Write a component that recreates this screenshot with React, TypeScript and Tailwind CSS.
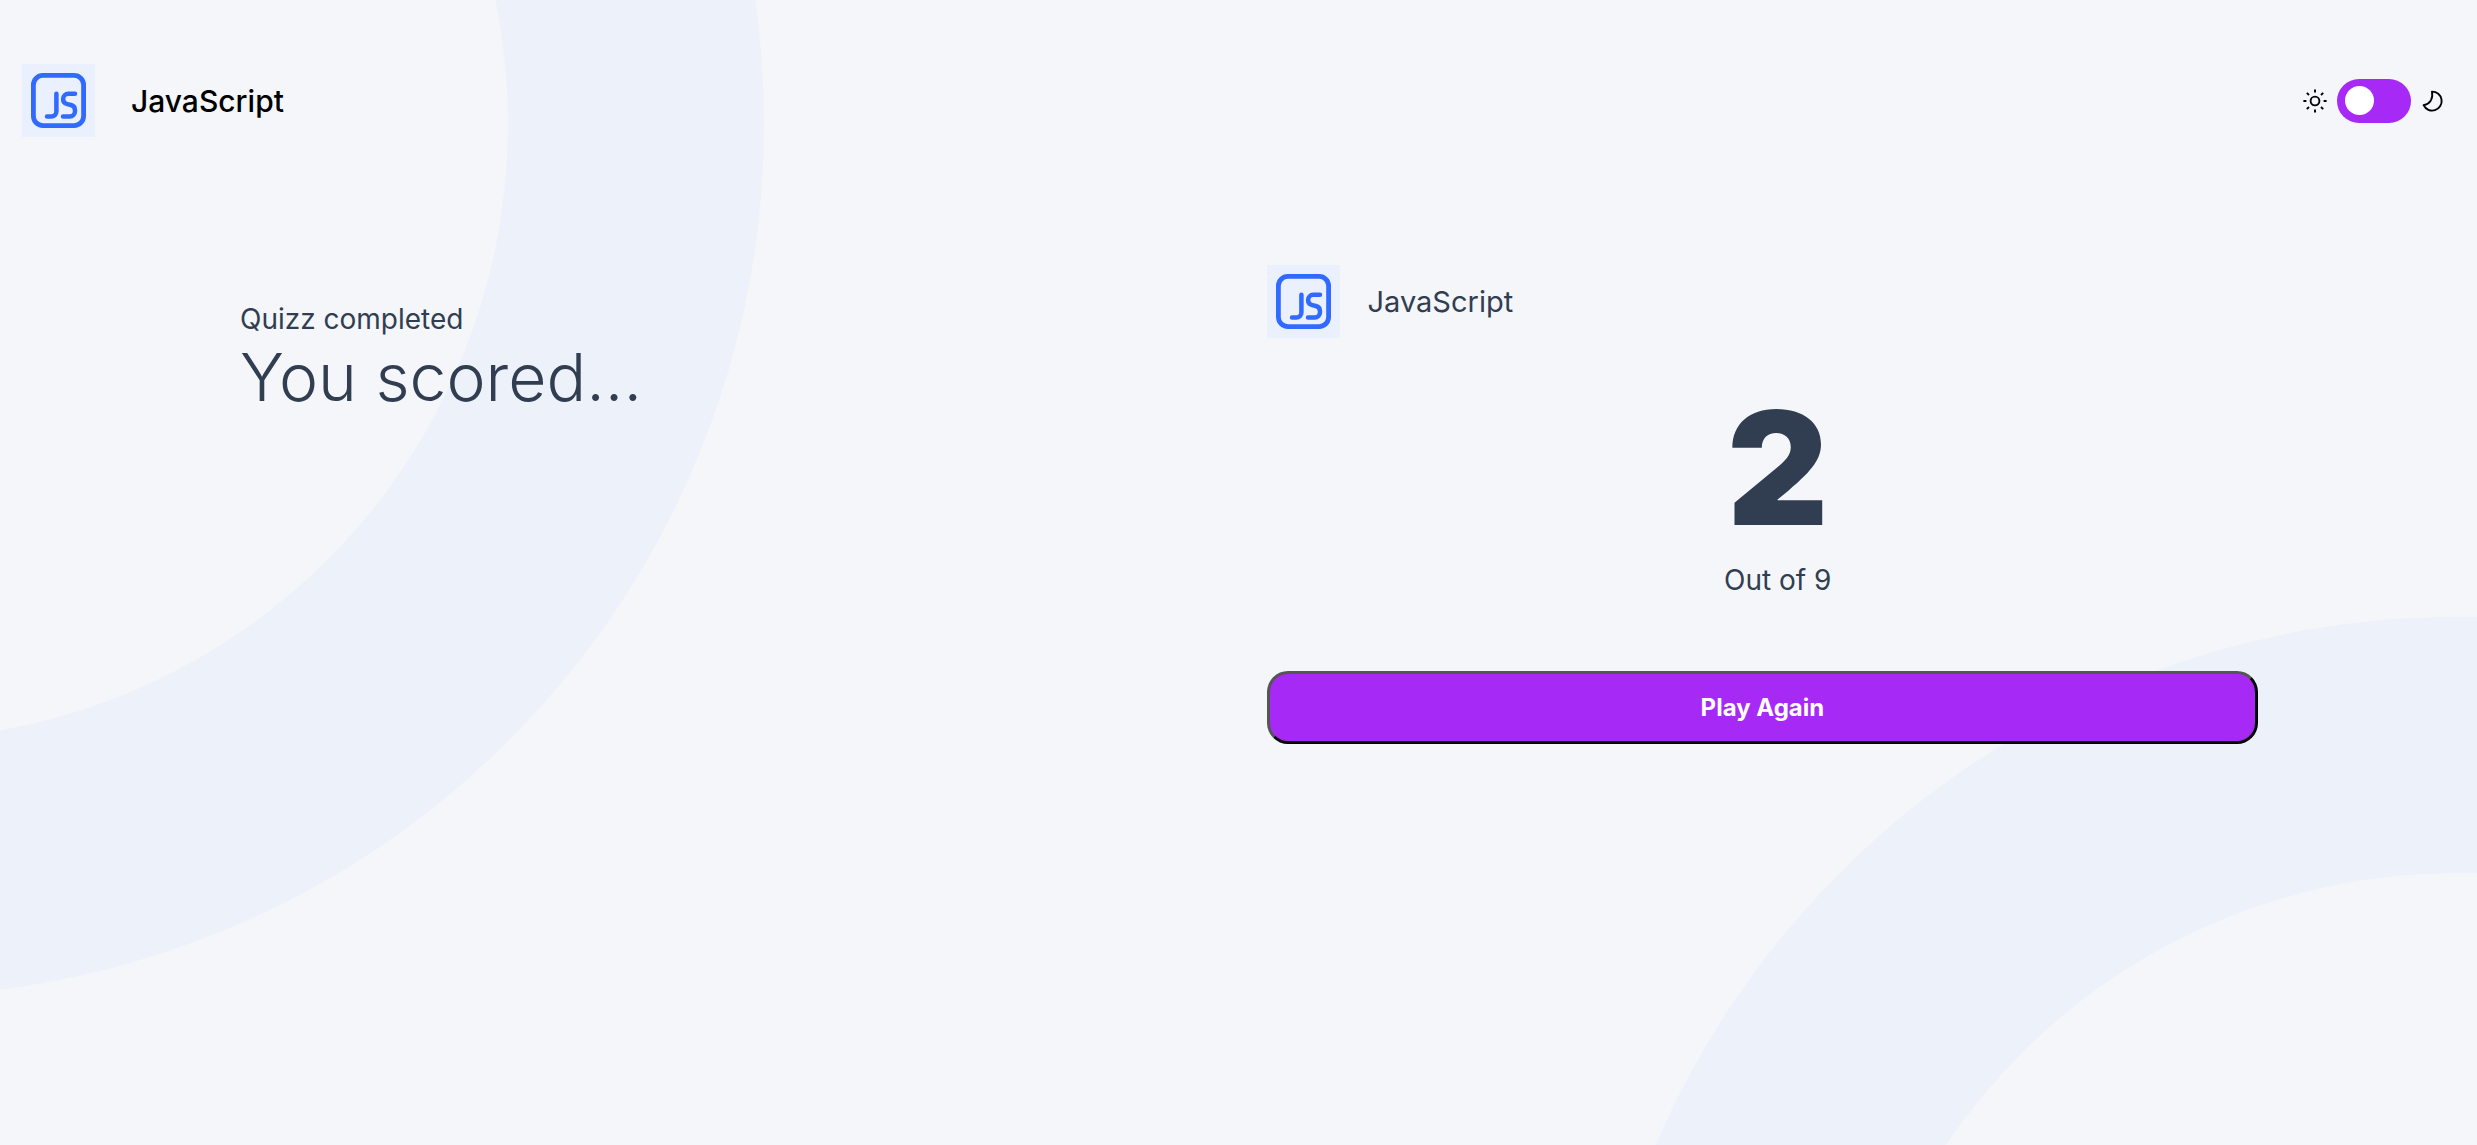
import { useState } from "react";

function RingsBackground() {
  return (
    <svg
      className="absolute inset-0 -z-10 h-full w-full"
      viewBox="0 0 2477 1145"
      preserveAspectRatio="xMidYMid slice"
      fill="none"
      stroke="#EDF1FA"
      strokeWidth="256"
      aria-hidden="true"
    >
      <circle cx="-108" cy="124" r="744" />
      <circle cx="2457" cy="1489" r="744" />
    </svg>
  );
}

function JavaScriptLogo() {
  return (
    <span className="size-[73px] shrink-0 bg-[#EBF0FF]">
      <svg
        viewBox="0 0 73 73"
        className="size-full"
        fill="none"
        stroke="#306AFF"
        strokeLinecap="round"
        strokeLinejoin="round"
        aria-hidden="true"
      >
        <rect x="11.4" y="11.4" width="50.2" height="50.2" rx="9.5" strokeWidth="4.8" />
        <path
          strokeWidth="4.5"
          d="M34.4 29.8V47.5a5 5 0 0 1-5 5H25"
        />
        <path
          strokeWidth="4.5"
          d="M53 29.8H46.3a5.2 5.2 0 0 0-5.2 5.2c0 2.9 1.5 4.5 4.2 5.1l3.6.9c2.7.7 4.1 2.3 4.1 5.2v1.1a5.2 5.2 0 0 1-5.2 5.2H41"
        />
      </svg>
    </span>
  );
}

function SunIcon() {
  return (
    <svg
      viewBox="0 0 24 24"
      className="size-6"
      fill="none"
      stroke="currentColor"
      strokeWidth="1.9"
      aria-hidden="true"
    >
      <circle cx="12" cy="12" r="4.4" />
      <path d="M12 .4v3M12 20.6v3M.4 12h3M20.6 12h3M3.8 3.8l2.2 2.2M18 18l2.2 2.2M3.8 20.2l2.2-2.2M18 6l2.2-2.2" />
    </svg>
  );
}

function MoonIcon() {
  return (
    <svg
      viewBox="0 0 24 24"
      className="size-6"
      fill="none"
      stroke="currentColor"
      strokeWidth="1.9"
      strokeLinejoin="round"
      aria-hidden="true"
    >
      <path d="M11 2.6A9.5 9.5 0 1 1 2.6 16.2C8.4 15 12.4 10.4 11 2.6Z" />
    </svg>
  );
}

export default function App() {
  const [dark, setDark] = useState(false);

  return (
    <div className="relative isolate min-h-screen overflow-hidden bg-[#F4F6FA] font-['Inter',sans-serif] text-[#313E51]">
      <RingsBackground />

      <header className="flex items-center justify-between pt-16 pr-8 pl-[22px] text-black">
        <div className="flex items-center gap-9">
          <JavaScriptLogo />
          <span className="text-[30px] leading-[36px] font-medium">JavaScript</span>
        </div>
        <div className="flex items-center gap-[10px]">
          <SunIcon />
          <input
            type="checkbox"
            role="switch"
            aria-label="Dark mode"
            checked={dark}
            onChange={(e) => setDark(e.target.checked)}
            className="flex h-11 w-[74px] cursor-pointer appearance-none items-center rounded-full bg-[#A729F5] px-2 before:size-[29px] before:rounded-full before:bg-white before:content-[''] checked:justify-end"
          />
          <MoonIcon />
        </div>
      </header>

      <main className="grid gap-x-1 gap-y-16 px-6 pt-32 pb-16 lg:grid-cols-2 lg:pr-[188px] lg:pl-[240px]">
        <section className="pt-9">
          <p className="text-[28px] leading-[36px]">Quizz completed</p>
          <h1 className="text-[66px] leading-[80px] font-light">You scored...</h1>
        </section>

        <section>
          <div className="flex items-center gap-7">
            <JavaScriptLogo />
            <span className="text-[29px] leading-[36px]">JavaScript</span>
          </div>
          <div className="mt-[50px] text-center">
            <p className="text-[157px] leading-[160px] font-black">2</p>
            <p className="mt-[14px] text-[28px] leading-[36px]">Out of 9</p>
          </div>
          <button
            type="button"
            className="mt-[73px] h-[73px] w-[97%] cursor-pointer rounded-[21px] border-[3px] border-t-[#555] border-r-black border-b-black border-l-[#555] bg-[#A729F5] text-[24px] leading-[36px] font-bold text-white"
          >
            Play Again
          </button>
        </section>
      </main>
    </div>
  );
}
